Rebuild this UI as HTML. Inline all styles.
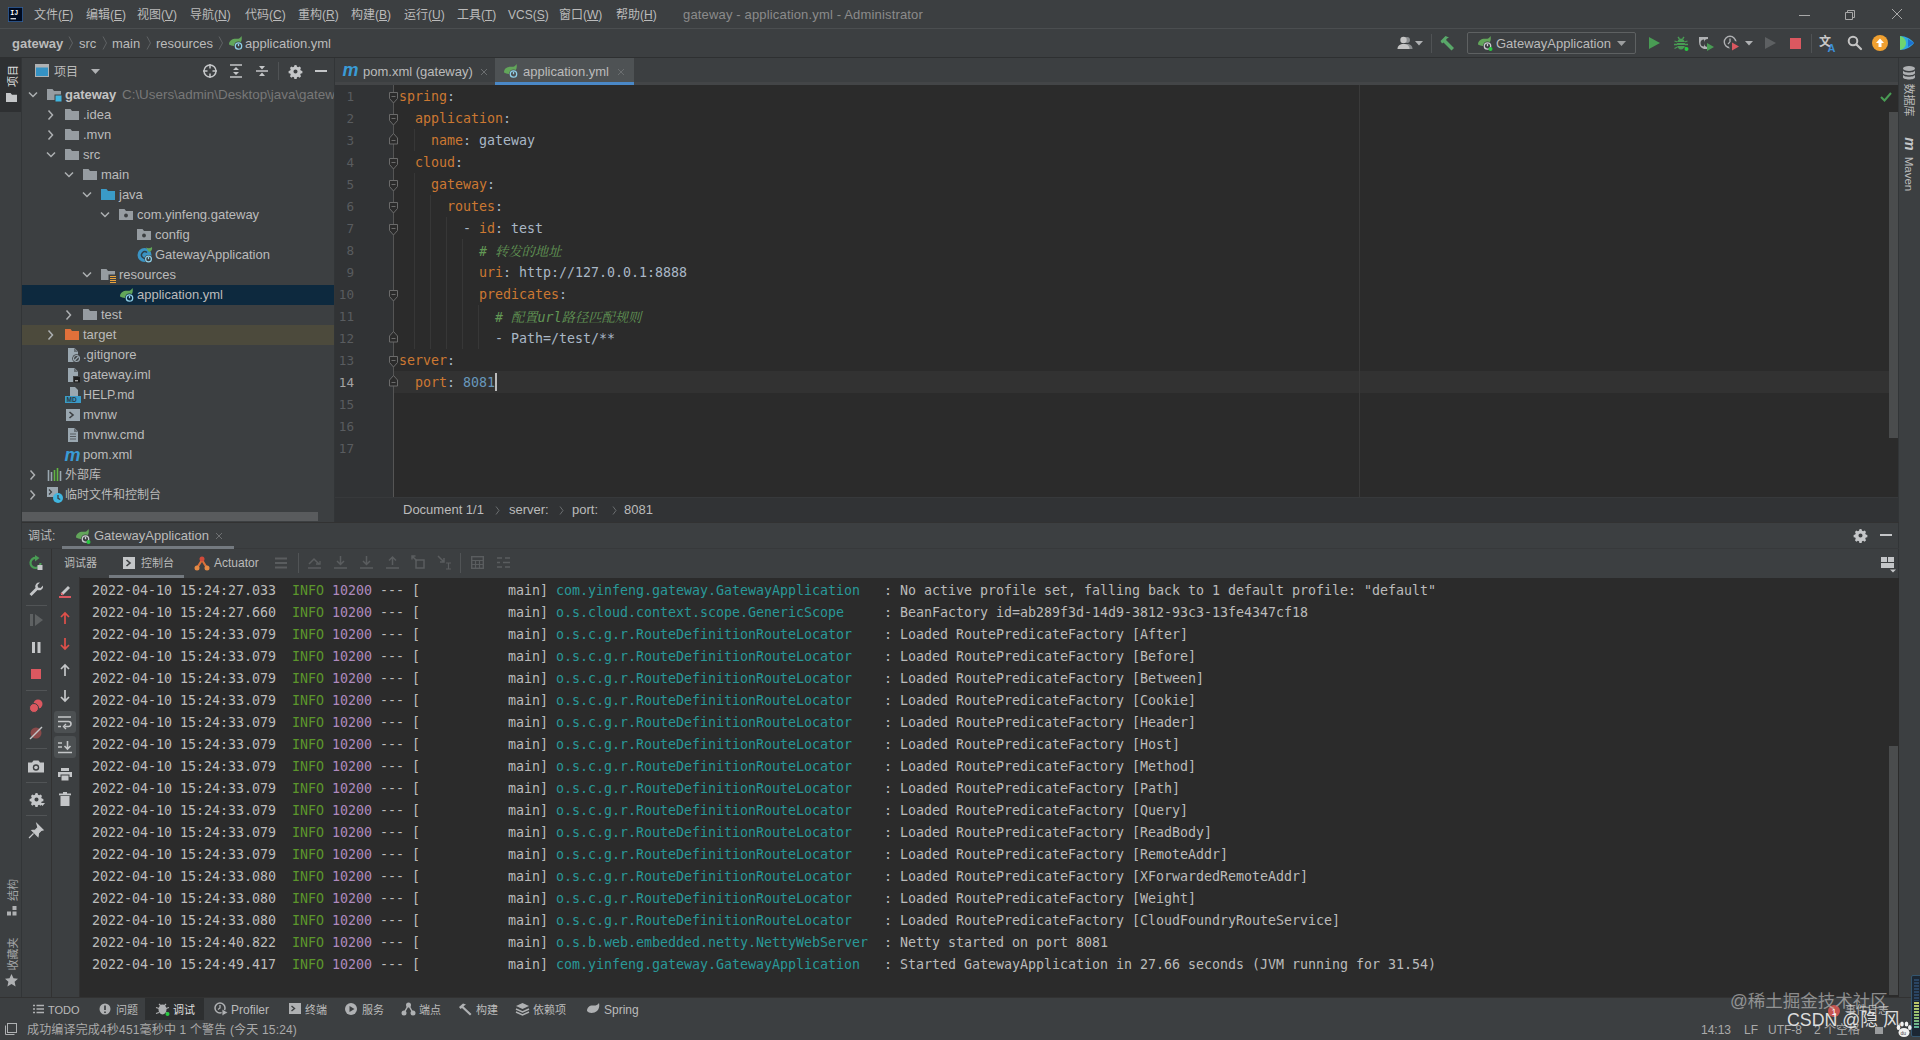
<!DOCTYPE html>
<html lang="zh-CN"><head><meta charset="utf-8"><title>gateway - application.yml - Administrator</title>
<style>
html,body{margin:0;padding:0}
body{width:1920px;height:1040px;overflow:hidden;background:#3c3f41;position:relative;
 font-family:"Liberation Sans","Noto Sans CJK SC",sans-serif;font-size:12px;color:#bbbbbb;}
.a{position:absolute}
.t{position:absolute;white-space:pre;line-height:20px;height:20px}
.l{font-size:13px}
.mono{font-family:"DejaVu Sans Mono","Liberation Mono","Noto Sans CJK SC",monospace;font-size:13.3px;letter-spacing:-0.0055px}
.k{color:#cc7832}.v{color:#a9b7c6}.c{color:#629755;font-style:italic}.n{color:#6897bb}
.cj{font-family:"Noto Serif CJK SC","Noto Sans CJK SC",serif}
.g{color:#5c962c}.m{color:#ae8abe}.cy{color:#299999}
.ln{position:absolute;left:334px;width:20px;text-align:right;color:#595c5f;font-family:"DejaVu Sans Mono","Liberation Mono",monospace;font-size:12.600px;line-height:22px;height:22px}
.cl{position:absolute;left:399px;height:22px;line-height:22px;white-space:pre;font-family:"DejaVu Sans Mono","Liberation Mono","Noto Sans CJK SC",monospace;font-size:13.3px;letter-spacing:-0.0055px;color:#a9b7c6}
.ll{position:absolute;left:92px;height:22px;line-height:22px;white-space:pre;color:#bbbbbb;font-family:"DejaVu Sans Mono","Liberation Mono","Noto Sans CJK SC",monospace;font-size:13.3px;letter-spacing:-0.0055px}
svg{position:absolute;overflow:visible}
</style></head><body>
<!-- menu bar -->
<svg style="left:7.5px;top:6.5px" width="15" height="15" viewBox="0 0 15 15"><rect x="0" y="0" width="15" height="15" fill="#35629c"/><rect x="0.800" y="0.800" width="13.400" height="13.400" fill="#000a1f"/><text x="2.300" y="8.300" font-family="Liberation Mono,monospace" font-size="7.500" font-weight="bold" fill="#fff" textLength="8" lengthAdjust="spacingAndGlyphs">IJ</text><rect x="2.500" y="11.200" width="5.500" height="1.100" fill="#fff"/></svg>
<span class="t" style="left:34px;top:5px">文件(<u>F</u>)</span>
<span class="t" style="left:86px;top:5px">编辑(<u>E</u>)</span>
<span class="t" style="left:137px;top:5px">视图(<u>V</u>)</span>
<span class="t" style="left:190px;top:5px">导航(<u>N</u>)</span>
<span class="t" style="left:245px;top:5px">代码(<u>C</u>)</span>
<span class="t" style="left:298px;top:5px">重构(<u>R</u>)</span>
<span class="t" style="left:351px;top:5px">构建(<u>B</u>)</span>
<span class="t" style="left:404px;top:5px">运行(<u>U</u>)</span>
<span class="t" style="left:457px;top:5px">工具(<u>T</u>)</span>
<span class="t" style="left:508px;top:5px">VCS(<u>S</u>)</span>
<span class="t" style="left:559px;top:5px">窗口(<u>W</u>)</span>
<span class="t" style="left:616px;top:5px">帮助(<u>H</u>)</span>
<span class="t l" style="left:683px;top:5px;color:#8b8b8b;letter-spacing:.160px">gateway - application.yml - Administrator</span>
<svg style="left:1790px;top:0px" width="130" height="28" viewBox="0 0 130 28"><path d="M9 15.500h11" stroke="#a8a8a8" stroke-width="1" fill="none"/><path d="M55.500 12.500h7v7h-7z M57.500 12.500v-2h7v7h-2" stroke="#a8a8a8" stroke-width="1" fill="none"/><path d="M102 9l10 10M112 9l-10 10" stroke="#a8a8a8" stroke-width="1" fill="none"/></svg>
<!-- navigation bar -->
<div class="a" style="left:0px;top:28px;width:1920px;height:1px;background:#4b4e50;"></div>
<div class="a" style="left:0px;top:57px;width:1920px;height:1px;background:#2e3031;"></div>
<span class="t l" style="left:12px;top:34px;font-weight:bold">gateway</span>
<span class="t l" style="left:79px;top:34px;">src</span>
<span class="t l" style="left:112px;top:34px;">main</span>
<span class="t l" style="left:156px;top:34px;">resources</span>
<span class="t l" style="left:245px;top:34px;">application.yml</span>
<svg style="left:68px;top:36px" width="6" height="14" viewBox="0 0 6 14"><path d="M1 0.500l3.500 6.500l-3.500 6.500" stroke="#5f6264" stroke-width="1" fill="none"/></svg>
<svg style="left:102px;top:36px" width="6" height="14" viewBox="0 0 6 14"><path d="M1 0.500l3.500 6.500l-3.500 6.500" stroke="#5f6264" stroke-width="1" fill="none"/></svg>
<svg style="left:146px;top:36px" width="6" height="14" viewBox="0 0 6 14"><path d="M1 0.500l3.500 6.500l-3.500 6.500" stroke="#5f6264" stroke-width="1" fill="none"/></svg>
<svg style="left:218px;top:36px" width="6" height="14" viewBox="0 0 6 14"><path d="M1 0.500l3.500 6.500l-3.500 6.500" stroke="#5f6264" stroke-width="1" fill="none"/></svg>
<svg style="left:228px;top:35px" width="16" height="16" viewBox="0 0 16 16"><path d="M1 9.500c0-4.200 3.800-6 7.500-5.700c2.200.200 3.800-.700 5-2.800c1 3.800-.400 8.200-4.800 9.500c-3 .800-5.700.300-7.700-1z" fill="#62a65a"/><circle cx="10.500" cy="11" r="4.500" fill="#3c3f41"/><circle cx="10.500" cy="11" r="3.200" fill="none" stroke="#8fd0e8" stroke-width="1.300"/><path d="M10.500 8.800v2.400" stroke="#8fd0e8" stroke-width="1.300"/></svg>
<svg style="left:1397px;top:35px" width="16" height="16" viewBox="0 0 16 16"><circle cx="10" cy="5" r="3" fill="#8a8d8f"/><path d="M4.500 14c0-3.500 2.500-5 5.500-5s5.500 1.500 5.500 5z" fill="#8a8d8f"/><circle cx="6.500" cy="5" r="3.200" fill="#c4c4c4"/><path d="M0.500 14c0-3.500 2.500-5 6-5s6 1.500 6 5z" fill="#c4c4c4"/></svg>
<svg style="left:1415px;top:41px" width="8" height="5" viewBox="0 0 8 5"><path d="M0 0h8l-4 4.500z" fill="#afb1b3"/></svg>
<div class="a" style="left:1431px;top:34px;width:1px;height:19px;background:#505355;"></div>
<svg style="left:1439px;top:35px" width="16" height="16" viewBox="0 0 16 16"><path d="M1.500 6l5-5l3.500 1.500l-2 1l-1 1.500l8 8l-2.500 2.500l-8-8l-1.500 1z" fill="#59a869"/></svg>
<div class="a" style="left:1467px;top:32px;width:167px;height:20px;border:1px solid #5e6162;border-radius:2px"></div>
<svg style="left:1477px;top:35px" width="16" height="16" viewBox="0 0 16 16"><path d="M1 9.500c0-4.200 3.800-6 7.500-5.700c2.200.200 3.800-.700 5-2.800c1 3.800-.400 8.200-4.800 9.500c-3 .800-5.700.300-7.700-1z" fill="#62a65a"/><circle cx="10.500" cy="11" r="4.500" fill="#3c3f41"/><circle cx="10.500" cy="11" r="3.200" fill="none" stroke="#c9ccce" stroke-width="1.300"/><path d="M10.500 8.800v2.400" stroke="#c9ccce" stroke-width="1.300"/><circle cx="13.500" cy="14" r="2" fill="#28c940"/></svg>
<span class="t l" style="left:1496px;top:34px;">GatewayApplication</span>
<svg style="left:1617px;top:41px" width="9" height="5" viewBox="0 0 9 5"><path d="M0 0h9l-4.500 5z" fill="#9c9e9f"/></svg>
<svg style="left:1649px;top:37px" width="11" height="12" viewBox="0 0 11 12"><path d="M0 0l11 6l-11 6z" fill="#499c54"/></svg>
<svg style="left:1673px;top:35px" width="16" height="16" viewBox="0 0 16 16"><path d="M5 2l1.500 2M11 2l-1.500 2M1.500 6l3 1M14.500 6l-3 1M1 9.500h3.500M15 9.500h-3.500M1.500 13.500l3-1.500M14.500 13.500l-3-1.500" stroke="#499c54" stroke-width="1.300" fill="none"/><ellipse cx="8" cy="9" rx="4" ry="5.500" fill="#499c54"/><path d="M4 7.500h8M4 10.500h8" stroke="#3c3f41" stroke-width="1"/><circle cx="13.500" cy="14" r="2" fill="#28c940"/></svg>
<svg style="left:1698px;top:35px" width="16" height="16" viewBox="0 0 16 16"><path d="M1 2h9v2a4 4 0 0 0 0 8v2h-4c-3-1-5-3.500-5-7z" fill="#afb1b3"/><path d="M6 4.500a3.500 3.500 0 0 0 0 7z" fill="#3c3f41"/><path d="M9 8l7 4l-7 4z" fill="#499c54"/></svg>
<svg style="left:1723px;top:35px" width="16" height="16" viewBox="0 0 16 16"><circle cx="7" cy="7" r="5.700" fill="none" stroke="#afb1b3" stroke-width="1.400"/><path d="M7 3.500v3.500l-2 2" stroke="#afb1b3" stroke-width="1.300" fill="none"/><circle cx="11" cy="11" r="5" fill="#3c3f41"/><path d="M9 7.500l7 4l-7 4z" fill="#db5860"/></svg>
<svg style="left:1745px;top:41px" width="8" height="5" viewBox="0 0 8 5"><path d="M0 0h8l-4 4.500z" fill="#afb1b3"/></svg>
<svg style="left:1765px;top:37px" width="11" height="12" viewBox="0 0 11 12"><path d="M0 0l11 6l-11 6z" fill="#5d6062"/></svg>
<div class="a" style="left:1790px;top:38px;width:11px;height:11px;background:#db5860;"></div>
<div class="a" style="left:1811px;top:34px;width:1px;height:19px;background:#505355;"></div>
<svg style="left:1819px;top:35px" width="18" height="18" viewBox="0 0 18 18"><text x="0" y="11" font-family="Noto Sans CJK SC,sans-serif" font-size="12" font-weight="bold" fill="#c8c8c8">文</text><text x="8.500" y="17" font-family="Liberation Sans,sans-serif" font-size="11" font-weight="bold" fill="#3d8fd8">A</text></svg>
<svg style="left:1847px;top:35px" width="16" height="16" viewBox="0 0 16 16"><circle cx="6" cy="6" r="4.300" fill="none" stroke="#c4c4c4" stroke-width="2"/><path d="M9.500 9.500l4.500 4.500" stroke="#c4c4c4" stroke-width="2.200" stroke-linecap="round"/></svg>
<svg style="left:1872px;top:35px" width="16" height="16" viewBox="0 0 16 16"><circle cx="8" cy="8" r="8" fill="#f0a030"/><path d="M8 3.500l4 4.500h-2.500v4h-3v-4h-2.500z" fill="#fff"/></svg>
<svg style="left:1899px;top:35px" width="16" height="16" viewBox="0 0 16 16"><path d="M1 1c6 0 11 3 14 7c-3 4-8 7-14 7z" fill="#2fa7e6"/><path d="M1 1c4 1 6 4 6 7s-2 6-6 7z" fill="#6fd36f"/><path d="M9 4l6 4l-6 4z" fill="#1d6fd0"/></svg>
<!-- left tool strip -->
<div class="a" style="left:0px;top:58px;width:21px;height:54px;background:#2e3032;"></div>
<div class="a" style="left:21px;top:58px;width:1px;height:940px;background:#323537;"></div>
<span class="a " style="left:12.5px;top:75.5px;transform:translate(-50%,-50%) rotate(-90deg);white-space:pre;line-height:14px;font-size:11px;color:#dddddd">项目</span>
<svg style="left:6px;top:93px" width="11" height="9" viewBox="0 0 11 9"><path d="M0 0h4.500l1.500 1.800h5v7.200h-11z" fill="#c4c6c8"/></svg>
<span class="a " style="left:12.5px;top:889.5px;transform:translate(-50%,-50%) rotate(-90deg);white-space:pre;line-height:14px;font-size:11px;color:#a2a4a6">结构</span>
<svg style="left:7px;top:906px" width="10" height="10" viewBox="0 0 10 10"><rect x="5.500" y="0" width="4" height="4" fill="#afb1b3"/><rect x="0" y="5.500" width="4" height="4" fill="#afb1b3"/><rect x="5.500" y="5.500" width="4" height="4" fill="#afb1b3"/></svg>
<span class="a " style="left:12.5px;top:954px;transform:translate(-50%,-50%) rotate(-90deg);white-space:pre;line-height:14px;font-size:11px;color:#a2a4a6">收藏夹</span>
<svg style="left:5px;top:974px" width="13" height="13" viewBox="0 0 13 13"><path d="M6.500 0l2 4.300l4.500.500l-3.400 3l1 4.700l-4.100-2.500l-4.100 2.500l1-4.700l-3.400-3l4.500-.500z" fill="#afb1b3"/></svg>
<!-- project panel -->
<div class="a" style="left:334px;top:58px;width:1px;height:464px;background:#323537;"></div>
<svg style="left:35px;top:64px" width="14" height="13" viewBox="0 0 14 13"><rect x="0.500" y="0.500" width="13" height="12" fill="#3592c4" stroke="#afb1b3" stroke-width="1"/><rect x="1" y="1" width="12" height="2.500" fill="#afb1b3"/></svg>
<span class="t " style="left:54px;top:62px;">项目</span>
<svg style="left:91px;top:69px" width="9" height="5" viewBox="0 0 9 5"><path d="M0 0h9l-4.500 5z" fill="#afb1b3"/></svg>
<svg style="left:203px;top:64px" width="14" height="14" viewBox="0 0 14 14"><circle cx="7" cy="7" r="6" fill="none" stroke="#c4c6c8" stroke-width="1.500"/><path d="M7 0v4.500M7 14v-4.500M0 7h4.500M14 7h-4.500" stroke="#c4c6c8" stroke-width="1.500"/></svg>
<svg style="left:229px;top:64px" width="14" height="14" viewBox="0 0 14 14"><path d="M1 1h12M1 13h12" stroke="#c4c6c8" stroke-width="1.500"/><path d="M7 3l3 3h-6zM7 11l3-3h-6z" fill="#c4c6c8"/></svg>
<svg style="left:255px;top:64px" width="14" height="14" viewBox="0 0 14 14"><path d="M1 7h12" stroke="#c4c6c8" stroke-width="1.500"/><path d="M7 5.500l3-3.500h-6zM7 8.500l3 3.500h-6z" fill="#c4c6c8"/></svg>
<div class="a" style="left:278px;top:62px;width:1px;height:18px;background:#505355;"></div>
<svg style="left:288.5px;top:64.5px" width="13" height="13" viewBox="0 0 14 14"><path d="M7 0l1.200.200l.400 1.700l1.300.600l1.500-.900l1.600 1.600l-.900 1.500l.600 1.300l1.700.400v2.400l-1.700.400l-.600 1.300l.900 1.500l-1.600 1.600l-1.500-.900l-1.300.600l-.400 1.700h-2.400l-.400-1.700l-1.300-.600l-1.500.900l-1.600-1.600l.900-1.500l-.600-1.300l-1.700-.400v-2.400l1.700-.400l.600-1.300l-.900-1.500l1.600-1.600l1.500.900l1.300-.600l.400-1.700z M7 4.800a2.200 2.200 0 1 0 0 4.400a2.200 2.200 0 1 0 0-4.400z" fill="#c4c6c8" fill-rule="evenodd"/></svg>
<div class="a" style="left:315px;top:70px;width:12px;height:2px;background:#c4c6c8;"></div>
<svg style="left:25px;top:87px" width="16" height="16" viewBox="0 0 16 16"><path d="M4 5.500l4 4l4-4" stroke="#adb0b2" stroke-width="1.500" fill="none"/></svg>
<svg style="left:47px;top:87px" width="16" height="16" viewBox="0 0 16 16"><path d="M0 2h5.500l1.500 2h7v9h-14z" fill="#969ca1"/><rect x="7.500" y="7.500" width="8" height="8" fill="#3c3f41"/><rect x="8.500" y="8.500" width="6" height="6" fill="#40b6e0"/></svg>
<span class="t l" style="left:65px;top:85px;font-weight:bold;color:#c4c4c4">gateway</span>
<svg style="left:43px;top:107px" width="16" height="16" viewBox="0 0 16 16"><path d="M5.500 3.500l4 4.500l-4 4.500" stroke="#adb0b2" stroke-width="1.500" fill="none"/></svg>
<svg style="left:65px;top:107px" width="16" height="16" viewBox="0 0 16 16"><path d="M0 2h5.500l1.500 2h7v9h-14z" fill="#969ca1"/></svg>
<span class="t l" style="left:83px;top:105px;">.idea</span>
<svg style="left:43px;top:127px" width="16" height="16" viewBox="0 0 16 16"><path d="M5.500 3.500l4 4.500l-4 4.500" stroke="#adb0b2" stroke-width="1.500" fill="none"/></svg>
<svg style="left:65px;top:127px" width="16" height="16" viewBox="0 0 16 16"><path d="M0 2h5.500l1.500 2h7v9h-14z" fill="#969ca1"/></svg>
<span class="t l" style="left:83px;top:125px;">.mvn</span>
<svg style="left:43px;top:147px" width="16" height="16" viewBox="0 0 16 16"><path d="M4 5.500l4 4l4-4" stroke="#adb0b2" stroke-width="1.500" fill="none"/></svg>
<svg style="left:65px;top:147px" width="16" height="16" viewBox="0 0 16 16"><path d="M0 2h5.500l1.500 2h7v9h-14z" fill="#969ca1"/></svg>
<span class="t l" style="left:83px;top:145px;">src</span>
<svg style="left:61px;top:167px" width="16" height="16" viewBox="0 0 16 16"><path d="M4 5.500l4 4l4-4" stroke="#adb0b2" stroke-width="1.500" fill="none"/></svg>
<svg style="left:83px;top:167px" width="16" height="16" viewBox="0 0 16 16"><path d="M0 2h5.500l1.500 2h7v9h-14z" fill="#969ca1"/></svg>
<span class="t l" style="left:101px;top:165px;">main</span>
<svg style="left:79px;top:187px" width="16" height="16" viewBox="0 0 16 16"><path d="M4 5.500l4 4l4-4" stroke="#adb0b2" stroke-width="1.500" fill="none"/></svg>
<svg style="left:101px;top:187px" width="16" height="16" viewBox="0 0 16 16"><path d="M0 2h5.500l1.500 2h7v9h-14z" fill="#3a9bc8"/></svg>
<span class="t l" style="left:119px;top:185px;">java</span>
<svg style="left:97px;top:207px" width="16" height="16" viewBox="0 0 16 16"><path d="M4 5.500l4 4l4-4" stroke="#adb0b2" stroke-width="1.500" fill="none"/></svg>
<svg style="left:119px;top:207px" width="16" height="16" viewBox="0 0 16 16"><path d="M0 2h5.500l1.500 2h7v9h-14z" fill="#969ca1"/><circle cx="7" cy="8.500" r="1.900" fill="#3c3f41"/></svg>
<span class="t l" style="left:137px;top:205px;">com.yinfeng.gateway</span>
<svg style="left:137px;top:227px" width="16" height="16" viewBox="0 0 16 16"><path d="M0 2h5.500l1.500 2h7v9h-14z" fill="#969ca1"/><circle cx="7" cy="8.500" r="1.900" fill="#3c3f41"/></svg>
<span class="t l" style="left:155px;top:225px;">config</span>
<svg style="left:137px;top:247px" width="16" height="16" viewBox="0 0 16 16"><circle cx="7.500" cy="8" r="7" fill="#3a94c4"/><path d="M10 5.500a3.300 3.300 0 1 0 0 5" stroke="#2b2b2b" stroke-width="1.500" fill="none" opacity=".800"/><path d="M9 0.500c2 1 4 1 6-.500c.500 2.500-.500 4.500-3 5z" fill="#62a65a"/><circle cx="11.500" cy="12" r="4" fill="#3c3f41"/><circle cx="11.500" cy="12" r="2.900" fill="none" stroke="#8fd0e8" stroke-width="1.200"/><path d="M11.500 10v2.200" stroke="#8fd0e8" stroke-width="1.200"/></svg>
<span class="t l" style="left:155px;top:245px;">GatewayApplication</span>
<svg style="left:79px;top:267px" width="16" height="16" viewBox="0 0 16 16"><path d="M4 5.500l4 4l4-4" stroke="#adb0b2" stroke-width="1.500" fill="none"/></svg>
<svg style="left:101px;top:267px" width="16" height="16" viewBox="0 0 16 16"><path d="M0 2h5.500l1.500 2h7v9h-14z" fill="#969ca1"/><rect x="7.500" y="7.500" width="8" height="8.500" fill="#3c3f41"/><path d="M9 9.500h6M9 11.500h6M9 13.500h6M9 15.500h6" stroke="#e8a33d" stroke-width="1"/></svg>
<span class="t l" style="left:119px;top:265px;">resources</span>
<div class="a" style="left:22px;top:285px;width:312px;height:20px;background:#0d293e;"></div>
<svg style="left:119px;top:287px" width="16" height="16" viewBox="0 0 16 16"><path d="M1 9.500c0-4.200 3.800-6 7.500-5.700c2.200.200 3.800-.700 5-2.800c1 3.800-.400 8.200-4.800 9.500c-3 .800-5.700.300-7.700-1z" fill="#62a65a"/><circle cx="10.500" cy="11" r="4.500" fill="#0d293e"/><circle cx="10.500" cy="11" r="3.200" fill="none" stroke="#8fd0e8" stroke-width="1.300"/><path d="M10.500 8.800v2.400" stroke="#8fd0e8" stroke-width="1.300"/></svg>
<span class="t l" style="left:137px;top:285px;">application.yml</span>
<svg style="left:61px;top:307px" width="16" height="16" viewBox="0 0 16 16"><path d="M5.500 3.500l4 4.500l-4 4.500" stroke="#adb0b2" stroke-width="1.500" fill="none"/></svg>
<svg style="left:83px;top:307px" width="16" height="16" viewBox="0 0 16 16"><path d="M0 2h5.500l1.500 2h7v9h-14z" fill="#969ca1"/></svg>
<span class="t l" style="left:101px;top:305px;">test</span>
<div class="a" style="left:22px;top:325px;width:312px;height:20px;background:#4c4a3c;"></div>
<svg style="left:43px;top:327px" width="16" height="16" viewBox="0 0 16 16"><path d="M5.500 3.500l4 4.500l-4 4.500" stroke="#adb0b2" stroke-width="1.500" fill="none"/></svg>
<svg style="left:65px;top:327px" width="16" height="16" viewBox="0 0 16 16"><path d="M0 2h5.500l1.500 2h7v9h-14z" fill="#e0703a"/></svg>
<span class="t l" style="left:83px;top:325px;">target</span>
<svg style="left:65px;top:347px" width="16" height="16" viewBox="0 0 16 16"><path d="M3 1h6.500l3.500 3.500v10.500h-10z" fill="#9aa7b0"/><path d="M9 1v4h4" fill="#3c3f41" opacity=".550"/><circle cx="11.500" cy="11.500" r="4.300" fill="#3c3f41"/><circle cx="11.500" cy="11.500" r="3" fill="none" stroke="#9aa7b0" stroke-width="1.200"/><path d="M9.500 13.500l4-4" stroke="#9aa7b0" stroke-width="1.200"/></svg>
<span class="t l" style="left:83px;top:345px;">.gitignore</span>
<svg style="left:65px;top:367px" width="16" height="16" viewBox="0 0 16 16"><path d="M3 1h6.500l3.500 3.500v10.500h-10z" fill="#9aa7b0"/><path d="M9 1v4h4" fill="#3c3f41" opacity=".550"/><rect x="8" y="9" width="8" height="7" fill="#3c3f41"/><rect x="9" y="10" width="6" height="5.500" fill="#1e1e1e"/><rect x="10" y="13.300" width="3" height="1" fill="#ddd"/></svg>
<span class="t l" style="left:83px;top:365px;">gateway.iml</span>
<svg style="left:65px;top:387px" width="16" height="16" viewBox="0 0 16 16"><path d="M5 0h5l3 3v6h-8z" fill="#9aa7b0"/><rect x="0" y="9" width="16" height="7" fill="#3a9bc8"/><text x="1.500" y="15" font-family="Liberation Sans,sans-serif" font-size="6.500" font-weight="bold" fill="#2b3a42">MD</text></svg>
<span class="t " style="left:83px;top:385px;font-size:12.400px">HELP.md</span>
<svg style="left:65px;top:407px" width="16" height="16" viewBox="0 0 16 16"><rect x="1" y="2" width="14" height="12" fill="#9aa7b0"/><path d="M4.500 5l3.500 3l-3.500 3" stroke="#3c3f41" stroke-width="1.600" fill="none"/></svg>
<span class="t l" style="left:83px;top:405px;">mvnw</span>
<svg style="left:65px;top:427px" width="16" height="16" viewBox="0 0 16 16"><path d="M3 1h6.500l3.500 3.500v10.500h-10z" fill="#9aa7b0"/><path d="M9 1v4h4" fill="#3c3f41" opacity=".550"/><path d="M5 7h6M5 9.500h6M5 12h6" stroke="#3c3f41" stroke-width="1" opacity=".700"/></svg>
<span class="t l" style="left:83px;top:425px;">mvnw.cmd</span>
<svg style="left:65px;top:447px" width="16" height="16" viewBox="0 0 16 16"><text x="-0.500" y="13.500" font-family="Liberation Sans,sans-serif" font-size="18" font-style="italic" font-weight="bold" fill="#3a9bd6" textLength="16" lengthAdjust="spacingAndGlyphs">m</text></svg>
<span class="t l" style="left:83px;top:445px;">pom.xml</span>
<svg style="left:25px;top:467px" width="16" height="16" viewBox="0 0 16 16"><path d="M5.500 3.500l4 4.500l-4 4.500" stroke="#adb0b2" stroke-width="1.500" fill="none"/></svg>
<svg style="left:47px;top:467px" width="16" height="16" viewBox="0 0 16 16"><path d="M1.500 3v11M4.500 5v9" stroke="#9aa7b0" stroke-width="1.600"/><path d="M7.500 3v11M10.500 1v13" stroke="#62b543" stroke-width="1.600"/><path d="M13.500 4v10" stroke="#9aa7b0" stroke-width="1.600"/></svg>
<span class="t " style="left:65px;top:465px;">外部库</span>
<svg style="left:25px;top:487px" width="16" height="16" viewBox="0 0 16 16"><path d="M5.500 3.500l4 4.500l-4 4.500" stroke="#adb0b2" stroke-width="1.500" fill="none"/></svg>
<svg style="left:47px;top:487px" width="16" height="16" viewBox="0 0 16 16"><rect x="0" y="0" width="11" height="10" fill="#9aa7b0"/><path d="M2 2.500l2.500 2.500l-2.500 2.500" stroke="#3c3f41" stroke-width="1.300" fill="none"/><circle cx="11" cy="11" r="5" fill="#40b6e0"/><path d="M11 8v3.300l2.200 1.200" stroke="#3c3f41" stroke-width="1.300" fill="none"/></svg>
<span class="t " style="left:65px;top:485px;">临时文件和控制台</span>
<div class="a" style="left:122px;top:85px;width:212px;height:20px;overflow:hidden"><span class="t l" style="left:0;top:0;color:#787878;font-size:13.400px">C:\Users\admin\Desktop\java\gateway</span></div>
<div class="a" style="left:22px;top:512px;width:296px;height:9px;background:#595b5d;"></div>
<!-- editor -->
<div class="a" style="left:335px;top:82px;width:1564px;height:3px;background:#434547;"></div>
<div class="a" style="left:495px;top:58px;width:139px;height:26px;background:#4e5254;"></div>
<div class="a" style="left:495px;top:82px;width:139px;height:3px;background:#4a88c7;"></div>
<svg style="left:343px;top:63px" width="18" height="16" viewBox="0 0 18 16"><text x="-0.500" y="13" font-family="Liberation Sans,sans-serif" font-size="18" font-style="italic" font-weight="bold" fill="#3a9bd6" textLength="16" lengthAdjust="spacingAndGlyphs">m</text></svg>
<span class="t l" style="left:363px;top:62px;">pom.xml (gateway)</span>
<svg style="left:480px;top:68px" width="8" height="8" viewBox="0 0 8 8"><path d="M1 1l6 6M7 1l-6 6" stroke="#6b6e70" stroke-width="1"/></svg>
<svg style="left:503px;top:63px" width="16" height="16" viewBox="0 0 16 16"><path d="M1 9.500c0-4.200 3.800-6 7.500-5.700c2.200.200 3.800-.700 5-2.800c1 3.800-.400 8.200-4.800 9.500c-3 .800-5.700.300-7.700-1z" fill="#62a65a"/><circle cx="10.500" cy="11" r="4.500" fill="#4e5254"/><circle cx="10.500" cy="11" r="3.200" fill="none" stroke="#8fd0e8" stroke-width="1.300"/><path d="M10.500 8.800v2.400" stroke="#8fd0e8" stroke-width="1.300"/></svg>
<span class="t l" style="left:523px;top:62px;">application.yml</span>
<svg style="left:617px;top:68px" width="8" height="8" viewBox="0 0 8 8"><path d="M1 1l6 6M7 1l-6 6" stroke="#6b6e70" stroke-width="1"/></svg>
<div class="a" style="left:335px;top:85px;width:1564px;height:412px;background:#2b2b2b;"></div>
<div class="a" style="left:335px;top:85px;width:58px;height:412px;background:#313335;"></div>
<div class="a" style="left:393px;top:371px;width:1496px;height:22px;background:#323232;"></div>
<div class="a" style="left:393px;top:85px;width:1px;height:412px;background:#555555;"></div>
<div class="a" style="left:1359px;top:85px;width:1px;height:412px;background:#3a3a3a;"></div>
<div class="a" style="left:414px;top:129px;width:1px;height:22px;background:#373737;"></div>
<div class="a" style="left:414px;top:173px;width:1px;height:176px;background:#373737;"></div>
<div class="a" style="left:430px;top:195px;width:1px;height:154px;background:#373737;"></div>
<div class="a" style="left:446px;top:217px;width:1px;height:132px;background:#373737;"></div>
<div class="a" style="left:462px;top:239px;width:1px;height:110px;background:#373737;"></div>
<div class="a" style="left:478px;top:305px;width:1px;height:44px;background:#373737;"></div>
<span class="ln" style="top:86px;">1</span>
<span class="ln" style="top:108px;">2</span>
<span class="ln" style="top:130px;">3</span>
<span class="ln" style="top:152px;">4</span>
<span class="ln" style="top:174px;">5</span>
<span class="ln" style="top:196px;">6</span>
<span class="ln" style="top:218px;">7</span>
<span class="ln" style="top:240px;">8</span>
<span class="ln" style="top:262px;">9</span>
<span class="ln" style="top:284px;">10</span>
<span class="ln" style="top:306px;">11</span>
<span class="ln" style="top:328px;">12</span>
<span class="ln" style="top:350px;">13</span>
<span class="ln" style="top:372px;color:#a4a3a3;">14</span>
<span class="ln" style="top:394px;">15</span>
<span class="ln" style="top:416px;">16</span>
<span class="ln" style="top:438px;">17</span>
<svg style="left:389px;top:91.5px" width="9" height="11.5" viewBox="0 0 9 11.5"><path d="M0.500 0.500h8v6l-4 4.500l-4-4.500z" fill="#2b2b2b" stroke="#6b6b6b" stroke-width="1"/><path d="M2.500 4.500h4" stroke="#6b6b6b" stroke-width="1"/></svg>
<svg style="left:389px;top:113.5px" width="9" height="11.5" viewBox="0 0 9 11.5"><path d="M0.500 0.500h8v6l-4 4.500l-4-4.500z" fill="#2b2b2b" stroke="#6b6b6b" stroke-width="1"/><path d="M2.500 4.500h4" stroke="#6b6b6b" stroke-width="1"/></svg>
<svg style="left:389px;top:133px" width="9" height="11.5" viewBox="0 0 9 11.5"><path d="M0.500 11h8v-6l-4-4.500l-4 4.500z" fill="#2b2b2b" stroke="#6b6b6b" stroke-width="1"/><path d="M2.500 7.500h4" stroke="#6b6b6b" stroke-width="1"/></svg>
<svg style="left:389px;top:157.5px" width="9" height="11.5" viewBox="0 0 9 11.5"><path d="M0.500 0.500h8v6l-4 4.500l-4-4.500z" fill="#2b2b2b" stroke="#6b6b6b" stroke-width="1"/><path d="M2.500 4.500h4" stroke="#6b6b6b" stroke-width="1"/></svg>
<svg style="left:389px;top:179.5px" width="9" height="11.5" viewBox="0 0 9 11.5"><path d="M0.500 0.500h8v6l-4 4.500l-4-4.500z" fill="#2b2b2b" stroke="#6b6b6b" stroke-width="1"/><path d="M2.500 4.500h4" stroke="#6b6b6b" stroke-width="1"/></svg>
<svg style="left:389px;top:201.5px" width="9" height="11.5" viewBox="0 0 9 11.5"><path d="M0.500 0.500h8v6l-4 4.500l-4-4.500z" fill="#2b2b2b" stroke="#6b6b6b" stroke-width="1"/><path d="M2.500 4.500h4" stroke="#6b6b6b" stroke-width="1"/></svg>
<svg style="left:389px;top:223.5px" width="9" height="11.5" viewBox="0 0 9 11.5"><path d="M0.500 0.500h8v6l-4 4.500l-4-4.500z" fill="#2b2b2b" stroke="#6b6b6b" stroke-width="1"/><path d="M2.500 4.500h4" stroke="#6b6b6b" stroke-width="1"/></svg>
<svg style="left:389px;top:289.5px" width="9" height="11.5" viewBox="0 0 9 11.5"><path d="M0.500 0.500h8v6l-4 4.500l-4-4.500z" fill="#2b2b2b" stroke="#6b6b6b" stroke-width="1"/><path d="M2.500 4.500h4" stroke="#6b6b6b" stroke-width="1"/></svg>
<svg style="left:389px;top:331px" width="9" height="11.5" viewBox="0 0 9 11.5"><path d="M0.500 11h8v-6l-4-4.500l-4 4.500z" fill="#2b2b2b" stroke="#6b6b6b" stroke-width="1"/><path d="M2.500 7.500h4" stroke="#6b6b6b" stroke-width="1"/></svg>
<svg style="left:389px;top:355.5px" width="9" height="11.5" viewBox="0 0 9 11.5"><path d="M0.500 0.500h8v6l-4 4.500l-4-4.500z" fill="#2b2b2b" stroke="#6b6b6b" stroke-width="1"/><path d="M2.500 4.500h4" stroke="#6b6b6b" stroke-width="1"/></svg>
<svg style="left:389px;top:375px" width="9" height="11.5" viewBox="0 0 9 11.5"><path d="M0.500 11h8v-6l-4-4.500l-4 4.500z" fill="#2b2b2b" stroke="#6b6b6b" stroke-width="1"/><path d="M2.500 7.500h4" stroke="#6b6b6b" stroke-width="1"/></svg>
<div class="cl" style="top:86px"><span class="k">spring</span>:</div>
<div class="cl" style="top:108px">  <span class="k">application</span>:</div>
<div class="cl" style="top:130px">    <span class="k">name</span>: gateway</div>
<div class="cl" style="top:152px">  <span class="k">cloud</span>:</div>
<div class="cl" style="top:174px">    <span class="k">gateway</span>:</div>
<div class="cl" style="top:196px">      <span class="k">routes</span>:</div>
<div class="cl" style="top:218px">        - <span class="k">id</span>: test</div>
<div class="cl" style="top:240px">          <span class="c"># <span class="cj">转发的地址</span></span></div>
<div class="cl" style="top:262px">          <span class="k">uri</span>: http:<span class="v">//127.0.0.1:8888</span></div>
<div class="cl" style="top:284px">          <span class="k">predicates</span>:</div>
<div class="cl" style="top:306px">            <span class="c"># <span class="cj">配置</span>url<span class="cj">路径匹配规则</span></span></div>
<div class="cl" style="top:328px">            - Path=/test/**</div>
<div class="cl" style="top:350px"><span class="k">server</span>:</div>
<div class="cl" style="top:372px">  <span class="k">port</span>: <span class="n">8081</span></div>
<div class="a" style="left:495px;top:373px;width:2px;height:18px;background:#bbbbbb;"></div>
<svg style="left:1880px;top:92px" width="12" height="10" viewBox="0 0 12 10"><path d="M1 5l3.500 3.500l6.500-7.500" stroke="#499c54" stroke-width="2" fill="none"/></svg>
<div class="a" style="left:1889px;top:112px;width:9px;height:326px;background:#4a4c4d;"></div>
<div class="a" style="left:335px;top:497px;width:1564px;height:25px;background:#313335;"></div>
<div class="a" style="left:335px;top:497px;width:1564px;height:1px;background:#37393b;"></div>
<span class="t l" style="left:403px;top:500px;">Document 1/1</span>
<span class="t l" style="left:509px;top:500px;">server:</span>
<span class="t l" style="left:572px;top:500px;">port:</span>
<span class="t l" style="left:624px;top:500px;">8081</span>
<svg style="left:495px;top:506px" width="5" height="9" viewBox="0 0 5 9"><path d="M1 0.500l3 4l-3 4" stroke="#6a6d6f" stroke-width="1" fill="none"/></svg>
<svg style="left:559px;top:506px" width="5" height="9" viewBox="0 0 5 9"><path d="M1 0.500l3 4l-3 4" stroke="#6a6d6f" stroke-width="1" fill="none"/></svg>
<svg style="left:612px;top:506px" width="5" height="9" viewBox="0 0 5 9"><path d="M1 0.500l3 4l-3 4" stroke="#6a6d6f" stroke-width="1" fill="none"/></svg>
<!-- right tool strip -->
<div class="a" style="left:1898px;top:58px;width:1px;height:940px;background:#323537;"></div>
<svg style="left:1903px;top:66px" width="12" height="14" viewBox="0 0 12 14"><ellipse cx="6" cy="2.500" rx="6" ry="2.500" fill="#afb1b3"/><path d="M0 4.300c0 3 12 3 12 0v2.700c0 3-12 3-12 0zM0 8.600c0 3 12 3 12 0v2.700c0 3-12 3-12 0z" fill="#afb1b3"/></svg>
<span class="a " style="left:1909px;top:100px;transform:translate(-50%,-50%) rotate(90deg);white-space:pre;line-height:14px;font-size:11px;color:#bbbbbb">数据库</span>
<span class="a" style="left:1910px;top:144px;transform:translate(-50%,-50%) rotate(90deg);font-family:'Liberation Sans',sans-serif;font-style:italic;font-weight:bold;font-size:15px;line-height:12px;color:#c4c6c8">m</span>
<span class="a " style="left:1909px;top:173.5px;transform:translate(-50%,-50%) rotate(90deg);white-space:pre;line-height:14px;font-size:11.5px;color:#bbbbbb">Maven</span>
<!-- debug tool window -->
<div class="a" style="left:22px;top:522px;width:1877px;height:1px;background:#323232;"></div>
<div class="a" style="left:22px;top:548px;width:1877px;height:1px;background:#37393b;"></div>
<span class="t " style="left:28px;top:526px;">调试:</span>
<svg style="left:75px;top:528px" width="16" height="16" viewBox="0 0 16 16"><path d="M1 9.500c0-4.200 3.800-6 7.500-5.700c2.200.200 3.800-.700 5-2.800c1 3.800-.400 8.200-4.800 9.500c-3 .800-5.700.300-7.700-1z" fill="#62a65a"/><circle cx="10.500" cy="11" r="4.500" fill="#3c3f41"/><circle cx="10.500" cy="11" r="3.200" fill="none" stroke="#c9ccce" stroke-width="1.300"/><path d="M10.500 8.800v2.400" stroke="#c9ccce" stroke-width="1.300"/><circle cx="13.500" cy="14" r="2" fill="#28c940"/></svg>
<span class="t l" style="left:94px;top:526px;">GatewayApplication</span>
<svg style="left:215px;top:532px" width="8" height="8" viewBox="0 0 8 8"><path d="M1 1l6 6M7 1l-6 6" stroke="#6e7072" stroke-width="1"/></svg>
<div class="a" style="left:62px;top:546px;width:172px;height:3px;background:#747a80;"></div>
<svg style="left:1853.5px;top:528.5px" width="13" height="13" viewBox="0 0 14 14"><path d="M7 0l1.200.200l.400 1.700l1.300.600l1.500-.900l1.600 1.600l-.900 1.500l.600 1.300l1.700.400v2.400l-1.700.400l-.600 1.300l.900 1.500l-1.600 1.600l-1.500-.900l-1.300.600l-.400 1.700h-2.400l-.400-1.700l-1.300-.600l-1.500.900l-1.600-1.600l.900-1.500l-.600-1.300l-1.700-.400v-2.400l1.700-.400l.600-1.300l-.900-1.500l1.600-1.600l1.500.900l1.300-.600l.400-1.700z M7 4.800a2.200 2.200 0 1 0 0 4.400a2.200 2.200 0 1 0 0-4.400z" fill="#c4c6c8" fill-rule="evenodd"/></svg>
<div class="a" style="left:1880px;top:534px;width:12px;height:2px;background:#c4c6c8;"></div>
<div class="a" style="left:51px;top:549px;width:1px;height:449px;background:#323232;"></div>
<div class="a" style="left:79px;top:577px;width:1px;height:421px;background:#323232;"></div>
<span class="t " style="left:64px;top:553px;font-size:11px">调试器</span>
<svg style="left:123px;top:557px" width="12" height="12" viewBox="0 0 12 12"><rect x="0" y="0" width="12" height="12" fill="#c4c6c8"/><path d="M3.500 3l3.500 3l-3.500 3" stroke="#3c3f41" stroke-width="1.600" fill="none"/></svg>
<span class="t " style="left:141px;top:553px;font-size:11px">控制台</span>
<div class="a" style="left:109px;top:575px;width:75px;height:3px;background:#747a80;"></div>
<svg style="left:194px;top:555px" width="16" height="16" viewBox="0 0 16 16"><path d="M3 13l5-8l5 8" stroke="#d9703a" stroke-width="2.200" fill="none"/><circle cx="8" cy="4" r="2.500" fill="#d04a3a"/><circle cx="3" cy="13" r="2.500" fill="#e58a45"/><circle cx="13" cy="13" r="2.500" fill="#e58a45"/></svg>
<span class="t " style="left:214px;top:553px;font-size:12px">Actuator</span>
<svg style="left:275px;top:557px" width="12" height="12" viewBox="0 0 12 12"><path d="M0 1.500h12M0 6h12M0 10.500h12" stroke="#5a5d5f" stroke-width="2"/></svg>
<div class="a" style="left:298px;top:553px;width:1px;height:20px;background:#515456;"></div>
<svg style="left:308px;top:556px" width="13" height="13" viewBox="0 0 13 13"><path d="M0 12h13" stroke="#5a5d5f" stroke-width="1.500"/><path d="M1 8l5-5l5 5" stroke="#5a5d5f" stroke-width="1.500" fill="none"/><path d="M8 8h4v-3" stroke="#5a5d5f" stroke-width="1.300" fill="none"/></svg>
<svg style="left:334px;top:556px" width="13" height="13" viewBox="0 0 13 13"><path d="M0 12h13M6.500 0v8M3 5l3.500 3.500l3.500-3.500" stroke="#5a5d5f" stroke-width="1.500" fill="none"/></svg>
<svg style="left:360px;top:556px" width="13" height="13" viewBox="0 0 13 13"><path d="M0 12h13M6.500 0v8M3 5l3.500 3.500l3.500-3.500" stroke="#5a5d5f" stroke-width="1.500" fill="none"/></svg>
<svg style="left:386px;top:556px" width="13" height="13" viewBox="0 0 13 13"><path d="M0 12h13M6.500 9v-8M3 4.500l3.500-3.500l3.500 3.500" stroke="#5a5d5f" stroke-width="1.500" fill="none"/></svg>
<svg style="left:412px;top:556px" width="13" height="13" viewBox="0 0 13 13"><rect x="4" y="4" width="8" height="8" fill="none" stroke="#5a5d5f" stroke-width="1.500"/><path d="M0 0l5 5M0 3.500v-3.500h3.500" stroke="#5a5d5f" stroke-width="1.500" fill="none"/></svg>
<svg style="left:438px;top:556px" width="14" height="13" viewBox="0 0 14 13"><path d="M0 0l6 6M6 2v4h-4" stroke="#5a5d5f" stroke-width="1.500" fill="none"/><path d="M8 7h5M10.500 7v6M8 13h5" stroke="#5a5d5f" stroke-width="1.200" fill="none"/></svg>
<div class="a" style="left:460px;top:553px;width:1px;height:20px;background:#515456;"></div>
<svg style="left:471px;top:556px" width="13" height="13" viewBox="0 0 13 13"><rect x="0.700" y="0.700" width="11.600" height="11.600" fill="none" stroke="#5a5d5f" stroke-width="1.400"/><path d="M0 4.500h13M0 8.500h13M4.500 4.500v8M8.500 4.500v8" stroke="#5a5d5f" stroke-width="1.200"/></svg>
<svg style="left:497px;top:556px" width="13" height="13" viewBox="0 0 13 13"><path d="M0 2h5M8 2h5M0 6.500h3M6 6.500h7M0 11h5M8 11h5" stroke="#5a5d5f" stroke-width="1.600"/></svg>
<svg style="left:1881px;top:557px" width="14" height="14" viewBox="0 0 14 14"><rect x="0" y="0" width="6" height="5" fill="#c4c6c8"/><rect x="7" y="0" width="6" height="5" fill="#c4c6c8"/><rect x="0" y="6" width="13" height="5" fill="#c4c6c8"/><path d="M9 12.500h6l-3 3z" fill="#c4c6c8"/></svg>
<svg style="left:28px;top:555px" width="16" height="16" viewBox="0 0 16 16"><path d="M12.500 8a5 5 0 1 1-4.500-5" stroke="#499c54" stroke-width="2.200" fill="none"/><path d="M7 0l4.500 3l-4.500 3.500z" fill="#499c54"/><rect x="9.500" y="10" width="5" height="5" fill="#c4c6c8"/></svg>
<svg style="left:29px;top:582px" width="15" height="15" viewBox="0 0 15 15"><path d="M14 3.500a4 4 0 0 1-5.500 4.500l-6 6l-2-2l6-6a4 4 0 0 1 4.500-5.500l-2.500 2.500l.500 2.500l2.500.500z" fill="#c4c6c8"/></svg>
<div class="a" style="left:26px;top:605px;width:21px;height:1px;background:#515456;"></div>
<svg style="left:30px;top:614px" width="13" height="12" viewBox="0 0 13 12"><rect x="0" y="0" width="3" height="12" fill="#5e6162"/><path d="M5 0l8 6l-8 6z" fill="#5e6162"/></svg>
<svg style="left:32px;top:642px" width="9" height="11" viewBox="0 0 9 11"><rect x="0" y="0" width="3" height="11" fill="#c4c6c8"/><rect x="5.500" y="0" width="3" height="11" fill="#c4c6c8"/></svg>
<div class="a" style="left:31px;top:669px;width:10px;height:10px;background:#db5860;"></div>
<div class="a" style="left:26px;top:690px;width:21px;height:1px;background:#515456;"></div>
<svg style="left:28px;top:698px" width="16" height="16" viewBox="0 0 16 16"><circle cx="10" cy="6" r="4.500" fill="#db5860"/><circle cx="6" cy="10" r="4.500" fill="#db5860" stroke="#3c3f41" stroke-width="1"/></svg>
<svg style="left:28px;top:725px" width="16" height="16" viewBox="0 0 16 16"><circle cx="8" cy="8" r="5.500" fill="#8a4a4a"/><path d="M2 14l12-12" stroke="#c4c6c8" stroke-width="1.500"/></svg>
<div class="a" style="left:26px;top:748px;width:21px;height:1px;background:#515456;"></div>
<svg style="left:28px;top:760px" width="16" height="13" viewBox="0 0 16 13"><path d="M0 2.500h4l1.500-2h5l1.500 2h4v10h-16z" fill="#c4c6c8"/><circle cx="8" cy="7.500" r="3.200" fill="#3c3f41"/><circle cx="8" cy="7.500" r="1.800" fill="#c4c6c8"/></svg>
<div class="a" style="left:26px;top:782px;width:21px;height:1px;background:#515456;"></div>
<svg style="left:29.5px;top:792.5px" width="13" height="13" viewBox="0 0 14 14"><path d="M7 0l1.200.200l.400 1.700l1.300.600l1.500-.900l1.600 1.600l-.900 1.500l.600 1.300l1.700.400v2.400l-1.700.400l-.600 1.300l.900 1.500l-1.600 1.600l-1.500-.900l-1.300.600l-.400 1.700h-2.400l-.400-1.700l-1.300-.600l-1.500.900l-1.600-1.600l.900-1.500l-.600-1.300l-1.700-.400v-2.400l1.700-.400l.600-1.300l-.900-1.500l1.600-1.600l1.500.900l1.300-.600l.400-1.700z M7 4.800a2.200 2.200 0 1 0 0 4.400a2.200 2.200 0 1 0 0-4.400z" fill="#c4c6c8" fill-rule="evenodd"/></svg>
<svg style="left:40px;top:803px" width="5" height="3" viewBox="0 0 5 3"><path d="M0 0h5l-2.500 3z" fill="#c4c6c8"/></svg>
<div class="a" style="left:26px;top:815px;width:21px;height:1px;background:#515456;"></div>
<svg style="left:29px;top:824px" width="14" height="14" viewBox="0 0 14 14"><path d="M8 0l6 6l-2 .500l-2.500 2.500l-.500 3.500l-6-6l3.500-.500l2.500-2.500zM4.500 9.500l-4.500 4.500" fill="#c4c6c8" stroke="#c4c6c8" stroke-width="1.200"/></svg>
<svg style="left:58px;top:584px" width="14" height="14" viewBox="0 0 14 14"><path d="M1 13h12" stroke="#db5860" stroke-width="2"/><path d="M3 9l7-7l2 2l-7 7h-2z" fill="#c4c6c8"/><path d="M3 9l2 2" stroke="#db5860" stroke-width="1.500"/></svg>
<svg style="left:60px;top:612px" width="10" height="12" viewBox="0 0 10 12"><path d="M5 12v-11M1 5l4-4l4 4" stroke="#e0504a" stroke-width="1.700" fill="none"/></svg>
<svg style="left:60px;top:638px" width="10" height="12" viewBox="0 0 10 12"><path d="M5 0v11M1 7l4 4l4-4" stroke="#e0504a" stroke-width="1.700" fill="none"/></svg>
<svg style="left:60px;top:664px" width="10" height="12" viewBox="0 0 10 12"><path d="M5 12v-11M1 5l4-4l4 4" stroke="#c4c6c8" stroke-width="1.700" fill="none"/></svg>
<svg style="left:60px;top:690px" width="10" height="12" viewBox="0 0 10 12"><path d="M5 0v11M1 7l4 4l4-4" stroke="#c4c6c8" stroke-width="1.700" fill="none"/></svg>
<div class="a" style="left:54px;top:711px;width:22px;height:22px;background:#4c5052;border-radius:3px"></div>
<svg style="left:58px;top:716px" width="14" height="12" viewBox="0 0 14 12"><path d="M0 1h13M0 5.500h10.500a2.500 2.500 0 0 1 0 5h-4M0 10.500h3" stroke="#c4c6c8" stroke-width="1.600" fill="none"/><path d="M8 8l-2.500 2.500l2.500 2.500" stroke="#c4c6c8" stroke-width="1.400" fill="none"/></svg>
<div class="a" style="left:54px;top:736px;width:22px;height:22px;background:#4c5052;border-radius:3px"></div>
<svg style="left:58px;top:741px" width="14" height="12" viewBox="0 0 14 12"><path d="M0 11.500h14M0 2h4M0 6h4" stroke="#c4c6c8" stroke-width="1.600"/><path d="M9.500 0v8M6.500 5l3 3l3-3" stroke="#c4c6c8" stroke-width="1.600" fill="none"/></svg>
<svg style="left:58px;top:768px" width="14" height="13" viewBox="0 0 14 13"><rect x="3" y="0" width="8" height="3" fill="#c4c6c8"/><rect x="0" y="4" width="14" height="5" fill="#c4c6c8"/><rect x="3" y="7" width="8" height="6" fill="#c4c6c8" stroke="#3c3f41" stroke-width="1"/></svg>
<svg style="left:59px;top:792px" width="12" height="14" viewBox="0 0 12 14"><rect x="1.500" y="4" width="9" height="10" fill="#c4c6c8"/><rect x="0" y="1.500" width="12" height="1.800" fill="#c4c6c8"/><rect x="4" y="0" width="4" height="2" fill="#c4c6c8"/></svg>
<div class="a" style="left:80px;top:578px;width:1819px;height:420px;background:#2b2b2b;"></div>
<div class="ll" style="top:580px">2022-04-10 15:24:27.033  <span class="g">INFO</span> <span class="m">10200</span> --- [           main] <span class="cy">com.yinfeng.gateway.GatewayApplication  </span> : No active profile set, falling back to 1 default profile: &quot;default&quot;</div>
<div class="ll" style="top:602px">2022-04-10 15:24:27.660  <span class="g">INFO</span> <span class="m">10200</span> --- [           main] <span class="cy">o.s.cloud.context.scope.GenericScope    </span> : BeanFactory id=ab289f3d-14d9-3812-93c3-13fe4347cf18</div>
<div class="ll" style="top:624px">2022-04-10 15:24:33.079  <span class="g">INFO</span> <span class="m">10200</span> --- [           main] <span class="cy">o.s.c.g.r.RouteDefinitionRouteLocator   </span> : Loaded RoutePredicateFactory [After]</div>
<div class="ll" style="top:646px">2022-04-10 15:24:33.079  <span class="g">INFO</span> <span class="m">10200</span> --- [           main] <span class="cy">o.s.c.g.r.RouteDefinitionRouteLocator   </span> : Loaded RoutePredicateFactory [Before]</div>
<div class="ll" style="top:668px">2022-04-10 15:24:33.079  <span class="g">INFO</span> <span class="m">10200</span> --- [           main] <span class="cy">o.s.c.g.r.RouteDefinitionRouteLocator   </span> : Loaded RoutePredicateFactory [Between]</div>
<div class="ll" style="top:690px">2022-04-10 15:24:33.079  <span class="g">INFO</span> <span class="m">10200</span> --- [           main] <span class="cy">o.s.c.g.r.RouteDefinitionRouteLocator   </span> : Loaded RoutePredicateFactory [Cookie]</div>
<div class="ll" style="top:712px">2022-04-10 15:24:33.079  <span class="g">INFO</span> <span class="m">10200</span> --- [           main] <span class="cy">o.s.c.g.r.RouteDefinitionRouteLocator   </span> : Loaded RoutePredicateFactory [Header]</div>
<div class="ll" style="top:734px">2022-04-10 15:24:33.079  <span class="g">INFO</span> <span class="m">10200</span> --- [           main] <span class="cy">o.s.c.g.r.RouteDefinitionRouteLocator   </span> : Loaded RoutePredicateFactory [Host]</div>
<div class="ll" style="top:756px">2022-04-10 15:24:33.079  <span class="g">INFO</span> <span class="m">10200</span> --- [           main] <span class="cy">o.s.c.g.r.RouteDefinitionRouteLocator   </span> : Loaded RoutePredicateFactory [Method]</div>
<div class="ll" style="top:778px">2022-04-10 15:24:33.079  <span class="g">INFO</span> <span class="m">10200</span> --- [           main] <span class="cy">o.s.c.g.r.RouteDefinitionRouteLocator   </span> : Loaded RoutePredicateFactory [Path]</div>
<div class="ll" style="top:800px">2022-04-10 15:24:33.079  <span class="g">INFO</span> <span class="m">10200</span> --- [           main] <span class="cy">o.s.c.g.r.RouteDefinitionRouteLocator   </span> : Loaded RoutePredicateFactory [Query]</div>
<div class="ll" style="top:822px">2022-04-10 15:24:33.079  <span class="g">INFO</span> <span class="m">10200</span> --- [           main] <span class="cy">o.s.c.g.r.RouteDefinitionRouteLocator   </span> : Loaded RoutePredicateFactory [ReadBody]</div>
<div class="ll" style="top:844px">2022-04-10 15:24:33.079  <span class="g">INFO</span> <span class="m">10200</span> --- [           main] <span class="cy">o.s.c.g.r.RouteDefinitionRouteLocator   </span> : Loaded RoutePredicateFactory [RemoteAddr]</div>
<div class="ll" style="top:866px">2022-04-10 15:24:33.080  <span class="g">INFO</span> <span class="m">10200</span> --- [           main] <span class="cy">o.s.c.g.r.RouteDefinitionRouteLocator   </span> : Loaded RoutePredicateFactory [XForwardedRemoteAddr]</div>
<div class="ll" style="top:888px">2022-04-10 15:24:33.080  <span class="g">INFO</span> <span class="m">10200</span> --- [           main] <span class="cy">o.s.c.g.r.RouteDefinitionRouteLocator   </span> : Loaded RoutePredicateFactory [Weight]</div>
<div class="ll" style="top:910px">2022-04-10 15:24:33.080  <span class="g">INFO</span> <span class="m">10200</span> --- [           main] <span class="cy">o.s.c.g.r.RouteDefinitionRouteLocator   </span> : Loaded RoutePredicateFactory [CloudFoundryRouteService]</div>
<div class="ll" style="top:932px">2022-04-10 15:24:40.822  <span class="g">INFO</span> <span class="m">10200</span> --- [           main] <span class="cy">o.s.b.web.embedded.netty.NettyWebServer </span> : Netty started on port 8081</div>
<div class="ll" style="top:954px">2022-04-10 15:24:49.417  <span class="g">INFO</span> <span class="m">10200</span> --- [           main] <span class="cy">com.yinfeng.gateway.GatewayApplication  </span> : Started GatewayApplication in 27.66 seconds (JVM running for 31.54)</div>
<div class="a" style="left:1889px;top:746px;width:9px;height:249px;background:#4a4c4d;"></div>
<!-- bottom tool window bar -->
<div class="a" style="left:0px;top:997px;width:1920px;height:1px;background:#323232;"></div>
<div class="a" style="left:0px;top:998px;width:1920px;height:22px;background:#3c3f41;"></div>
<div class="a" style="left:145px;top:998px;width:59px;height:22px;background:#2d2f30;"></div>
<svg style="left:33px;top:1004px" width="11" height="10" viewBox="0 0 11 10"><path d="M0 1.500h2M3.500 1.500h7.500M0 5h2M3.500 5h7.500M0 8.500h2M3.500 8.500h7.500" stroke="#afb1b3" stroke-width="1.600"/></svg>
<span class="t " style="left:48px;top:1000px;font-size:11px">TODO</span>
<svg style="left:99px;top:1003px" width="12" height="12" viewBox="0 0 12 12"><circle cx="6" cy="6" r="5.500" fill="#afb1b3"/><path d="M6 2.500v4.500M6 8.500v1.500" stroke="#3c3f41" stroke-width="1.700"/></svg>
<span class="t " style="left:116px;top:1000px;font-size:11px">问题</span>
<svg style="left:156px;top:1002px" width="14" height="14" viewBox="0 0 14 14"><ellipse cx="6.500" cy="7.500" rx="4" ry="5" fill="#afb1b3"/><path d="M3 2l2 2M10 2l-2 2M0 5.500l3 1M13 5.500l-3 1M0 11.500l3-1M13 11.500l-3-1" stroke="#afb1b3" stroke-width="1.200"/><circle cx="11.500" cy="12" r="2" fill="#28c940"/></svg>
<span class="t " style="left:173px;top:1000px;font-size:11px;color:#dedede">调试</span>
<svg style="left:214px;top:1002px" width="14" height="14" viewBox="0 0 14 14"><circle cx="6" cy="6" r="5" fill="none" stroke="#afb1b3" stroke-width="1.500"/><path d="M6 3v3l-2 1.500" stroke="#afb1b3" stroke-width="1.300" fill="none"/><path d="M8 7l6 3.500l-6 3.500z" fill="#afb1b3" stroke="#3c3f41" stroke-width=".800"/></svg>
<span class="t " style="left:231px;top:1000px;font-size:12px">Profiler</span>
<svg style="left:289px;top:1003px" width="12" height="11" viewBox="0 0 12 11"><rect x="0" y="0" width="12" height="11" fill="#afb1b3"/><path d="M2.500 3l3 2.500l-3 2.500" stroke="#3c3f41" stroke-width="1.400" fill="none"/></svg>
<span class="t " style="left:305px;top:1000px;font-size:11px">终端</span>
<svg style="left:345px;top:1003px" width="12" height="12" viewBox="0 0 12 12"><circle cx="6" cy="6" r="6" fill="#afb1b3"/><path d="M4.500 3l5 3l-5 3z" fill="#3c3f41"/></svg>
<span class="t " style="left:362px;top:1000px;font-size:11px">服务</span>
<svg style="left:401px;top:1002px" width="15" height="14" viewBox="0 0 15 14"><path d="M3 11l4.500-8l4.500 8" stroke="#afb1b3" stroke-width="1.500" fill="none"/><circle cx="7.500" cy="3" r="2.500" fill="#afb1b3"/><circle cx="3" cy="11" r="2.500" fill="#afb1b3"/><circle cx="12" cy="11" r="2.500" fill="#afb1b3"/></svg>
<span class="t " style="left:419px;top:1000px;font-size:11px">端点</span>
<svg style="left:458px;top:1002px" width="14" height="14" viewBox="0 0 14 14"><path d="M1 5l4-3.500l3 1l-1.500 1l-1 1l8 7.500l-1.500 1.500l-8-7.500l-1.500 1z" fill="#afb1b3"/></svg>
<span class="t " style="left:476px;top:1000px;font-size:11px">构建</span>
<svg style="left:516px;top:1003px" width="13" height="12" viewBox="0 0 13 12"><path d="M6.500 0l6.500 3l-6.500 3l-6.500-3z" fill="#afb1b3"/><path d="M0 6l6.500 3l6.500-3M0 9l6.500 3l6.500-3" stroke="#afb1b3" stroke-width="1.500" fill="none"/></svg>
<span class="t " style="left:533px;top:1000px;font-size:11px">依赖项</span>
<svg style="left:587px;top:1003px" width="13" height="12" viewBox="0 0 13 12"><path d="M0 8c0-4 3-6 6.500-5.500c2 .300 4-.500 5.500-2.500c1 4-.500 8-4.500 9.500c-3 1-6 .500-7.500-1.500z" fill="#afb1b3"/></svg>
<span class="t " style="left:604px;top:1000px;font-size:12px">Spring</span>
<!-- status bar -->
<svg style="left:5px;top:1023px" width="12" height="12" viewBox="0 0 12 12"><rect x="2.500" y="0.500" width="9" height="9" fill="none" stroke="#afb1b3" stroke-width="1"/><path d="M0.500 2.500v9h9" stroke="#afb1b3" stroke-width="1" fill="none"/></svg>
<span class="t " style="left:27px;top:1020px;color:#aaaaaa;letter-spacing:.17px">成功编译完成4秒451毫秒中 1 个警告 (今天 15:24)</span>
<span class="t " style="left:1701px;top:1020px;color:#aaaaaa">14:13</span>
<span class="t " style="left:1744px;top:1020px;color:#aaaaaa">LF</span>
<span class="t " style="left:1768px;top:1020px;color:#aaaaaa">UTF-8</span>
<span class="t " style="left:1814px;top:1020px;color:#aaaaaa">2 个空格</span>
<svg style="left:1875px;top:1024px" width="10" height="10" viewBox="0 0 10 10"><rect x="0" y="3" width="8" height="7" fill="#9a9c9e"/></svg>
<svg style="left:1828px;top:1005px" width="12" height="12" viewBox="0 0 12 12"><circle cx="6" cy="6" r="6" fill="#c75450"/><text x="3.500" y="9.500" font-family="Liberation Sans,sans-serif" font-size="9" fill="#fff">1</text></svg>
<span class="t " style="left:1845px;top:1000px;font-size:11px;color:#bbbbbb">事件日志</span>
<div class="a" style="left:1911px;top:975px;width:10px;height:60px;background:#1c2733;border:1px solid #34566f;border-radius:2px"></div>
<div class="a" style="left:1914px;top:979px;width:5px;height:22px;background:repeating-linear-gradient(to bottom,#2a4563 0,#2a4563 2px,transparent 2px,transparent 3px)"></div>
<div class="a" style="left:1914px;top:1002px;width:5px;height:27px;background:linear-gradient(to bottom,#c0c76a,#8fc070 55%,#58b0a0)"></div>
<div class="a" style="left:1914px;top:1002px;width:5px;height:27px;background:repeating-linear-gradient(to bottom,transparent 0,transparent 2px,#1c2733 2px,#1c2733 3px)"></div>
<span class="t" style="left:1730px;top:989px;font-size:17.500px;line-height:24px;height:24px;color:rgba(205,205,205,.600)">@稀土掘金技术社区</span>
<span class="t" style="left:1787px;top:1007px;font-size:17.800px;line-height:26px;height:26px;color:rgba(238,238,238,.920)">CSDN @隐 风</span>
<svg style="left:1896px;top:1021px" width="16" height="17" viewBox="0 0 16 17"><ellipse cx="8" cy="11.500" rx="5.500" ry="4.500" fill="#f2f2f2"/><ellipse cx="2.500" cy="6.500" rx="1.800" ry="2.500" fill="#f2f2f2"/><ellipse cx="6" cy="3" rx="1.800" ry="2.600" fill="#f2f2f2"/><ellipse cx="10.500" cy="3" rx="1.800" ry="2.600" fill="#f2f2f2"/><ellipse cx="13.800" cy="6.500" rx="1.800" ry="2.500" fill="#f2f2f2"/><text x="4.500" y="14" font-family="Liberation Sans,sans-serif" font-size="5" fill="#3c3f41">du</text></svg>
</body></html>
